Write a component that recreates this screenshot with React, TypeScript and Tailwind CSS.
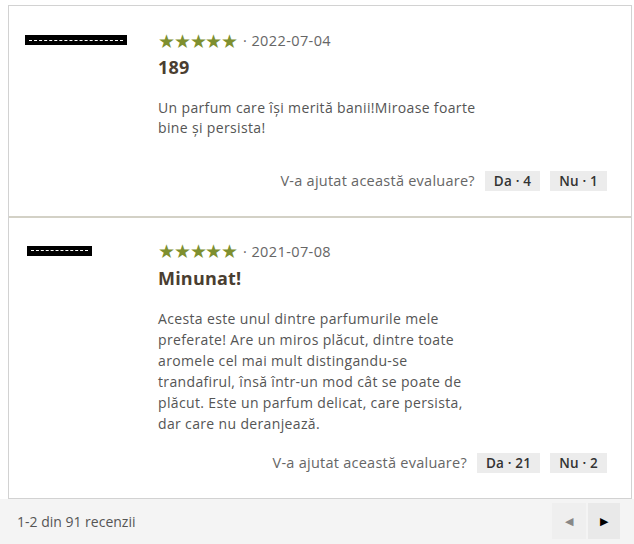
import React from 'react';

interface Review {
  nameWidth: string;
  date: string;
  title: string;
  lines: string[];
  yes: number;
  no: number;
}

const reviews: Review[] = [
  {
    nameWidth: 'w-[102px] ml-0',
    date: '2022-07-04',
    title: '189',
    lines: ['Un parfum care își merită banii!Miroase foarte', 'bine și persista!'],
    yes: 4,
    no: 1,
  },
  {
    nameWidth: 'w-[65px] ml-[2px]',
    date: '2021-07-08',
    title: 'Minunat!',
    lines: [
      'Acesta este unul dintre parfumurile mele',
      'preferate! Are un miros plăcut, dintre toate',
      'aromele cel mai mult distingandu-se',
      'trandafirul, însă într-un mod cât se poate de',
      'plăcut. Este un parfum delicat, care persista,',
      'dar care nu deranjează.',
    ],
    yes: 21,
    no: 2,
  },
];

function ReviewRow({ review, first }: { review: Review; first: boolean }) {
  return (
    <div className={`flex pl-[16px] pr-[24px] pb-[24px] ${first ? 'pt-[28px]' : 'pt-[27px] border-t-2 border-[#d3d1c6]'}`}>
      {/* redacted author name */}
      <div className="w-[133px] shrink-0 pt-[1px]">
        <div className={`${review.nameWidth} h-[10px] bg-black flex items-center px-[4px]`}>
          <div className="w-full border-t border-dashed border-white" />
        </div>
      </div>

      <div className="flex-1">
        <div className="flex items-center h-[14px]">
          <span className="text-[19px] leading-none text-[#7e8f2f] tracking-[-1.2px]">★★★★★</span>
          <span className="ml-[6px] text-[14.5px] text-[#666] tracking-[0.4px]">· {review.date}</span>
        </div>
        <h3 className="mt-[7px] text-[18px] leading-[24px] font-bold text-[#4a3e31] tracking-[0.2px]">{review.title}</h3>
        <p className={`whitespace-nowrap text-[14px] text-[#555] tracking-[0.35px] ${first ? 'mt-[19px] leading-[20px]' : 'mt-[18px] leading-[21px]'}`}>
          {review.lines.map((l, i) => (
            <React.Fragment key={i}>
              {l}
              {i < review.lines.length - 1 && <br />}
            </React.Fragment>
          ))}
        </p>
        <div className={`flex items-center justify-end gap-[10px] ${first ? 'mt-[32px]' : 'mt-[18px]'}`}>
          <span className="text-[14.5px] text-[#666] tracking-[0.25px]">V-a ajutat această evaluare?</span>
          <button className="h-[20px] px-[9px] bg-[#ececec] text-[13.5px] font-semibold text-[#333] tracking-[0.2px]">Da · {review.yes}</button>
          <button className="h-[20px] px-[9px] bg-[#ececec] text-[13.5px] font-semibold text-[#333] tracking-[0.2px]">Nu · {review.no}</button>
        </div>
      </div>
    </div>
  );
}

export default function App() {
  return (
    <div className="w-[634px] h-[544px] bg-white overflow-hidden flex flex-col" style={{ fontFamily: '"Open Sans", "Liberation Sans", sans-serif' }}>
      <div className="mx-[8px] mt-[5px] border border-[#d2d2d2] bg-white w-[624px]">
        {reviews.map((r, i) => (
          <ReviewRow key={r.date} review={r} first={i === 0} />
        ))}
      </div>

      {/* pagination footer */}
      <div className="flex-1 bg-[#f4f4f4] flex items-center justify-between pl-[17px] pr-[14px]">
        <span className="text-[14px] text-[#555]">1-2 din 91 recenzii</span>
        <div className="flex gap-[2px]">
          <button className="w-[34px] h-[36px] bg-[#efefef] text-[11px] text-[#888] flex items-center justify-center">◀</button>
          <button className="w-[32px] h-[36px] bg-[#e9e9e9] text-[11px] text-black flex items-center justify-center">▶</button>
        </div>
      </div>
    </div>
  );
}
